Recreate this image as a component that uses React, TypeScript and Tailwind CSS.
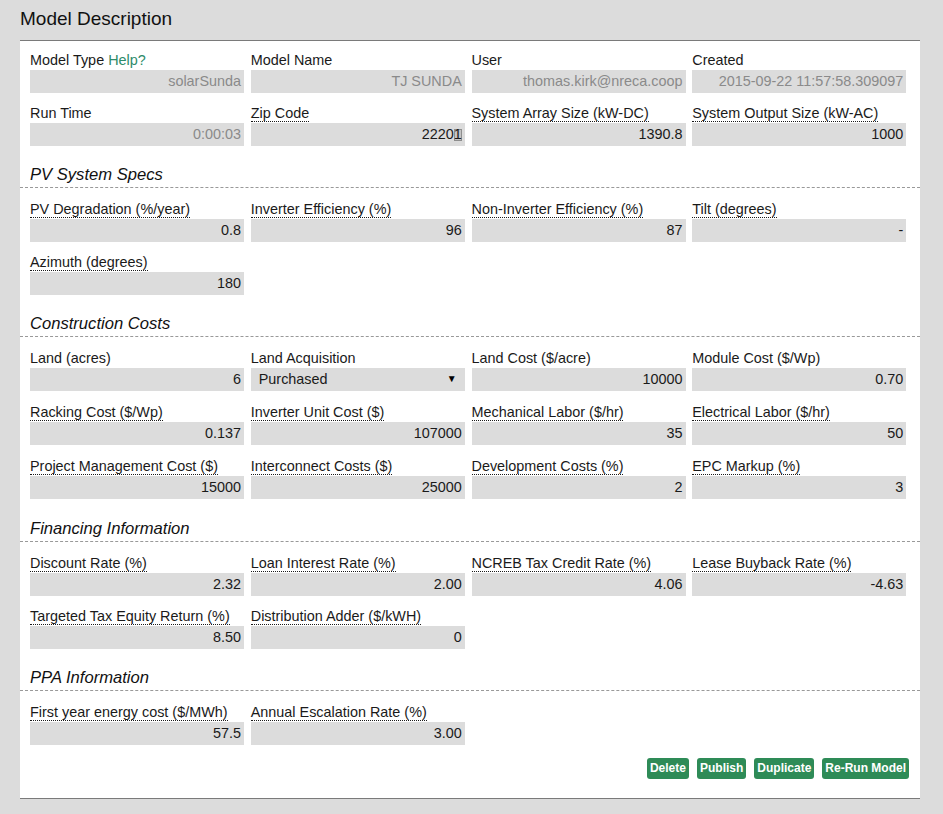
import React from "react";

type Field = {
  label: string;
  value: string;
  u?: boolean;
  disabled?: boolean;
  help?: boolean;
  select?: boolean;
  zip?: boolean;
};

const top: Field[] = [
  { label: "Model Type", value: "solarSunda", disabled: true, help: true },
  { label: "Model Name", value: "TJ SUNDA", disabled: true },
  { label: "User", value: "thomas.kirk@nreca.coop", disabled: true },
  { label: "Created", value: "2015-09-22 11:57:58.309097", disabled: true },
  { label: "Run Time", value: "0:00:03", disabled: true },
  { label: "Zip Code", value: "22201", u: true, zip: true },
  { label: "System Array Size (kW-DC)", value: "1390.8", u: true },
  { label: "System Output Size (kW-AC)", value: "1000", u: true },
];

const sections: { title: string; tall?: boolean; fields: Field[] }[] = [
  {
    title: "PV System Specs",
    fields: [
      { label: "PV Degradation (%/year)", value: "0.8", u: true },
      { label: "Inverter Efficiency (%)", value: "96", u: true },
      { label: "Non-Inverter Efficiency (%)", value: "87", u: true },
      { label: "Tilt (degrees)", value: "-", u: true },
      { label: "Azimuth (degrees)", value: "180", u: true },
    ],
  },
  {
    title: "Construction Costs",
    tall: true,
    fields: [
      { label: "Land (acres)", value: "6" },
      { label: "Land Acquisition", value: "Purchased", select: true },
      { label: "Land Cost ($/acre)", value: "10000" },
      { label: "Module Cost ($/Wp)", value: "0.70" },
      { label: "Racking Cost ($/Wp)", value: "0.137", u: true },
      { label: "Inverter Unit Cost ($)", value: "107000", u: true },
      { label: "Mechanical Labor ($/hr)", value: "35", u: true },
      { label: "Electrical Labor ($/hr)", value: "50", u: true },
      { label: "Project Management Cost ($)", value: "15000", u: true },
      { label: "Interconnect Costs ($)", value: "25000", u: true },
      { label: "Development Costs (%)", value: "2", u: true },
      { label: "EPC Markup (%)", value: "3", u: true },
    ],
  },
  {
    title: "Financing Information",
    fields: [
      { label: "Discount Rate (%)", value: "2.32", u: true },
      { label: "Loan Interest Rate (%)", value: "2.00", u: true },
      { label: "NCREB Tax Credit Rate (%)", value: "4.06", u: true },
      { label: "Lease Buyback Rate (%)", value: "-4.63", u: true },
      { label: "Targeted Tax Equity Return (%)", value: "8.50", u: true },
      { label: "Distribution Adder ($/kWH)", value: "0", u: true },
    ],
  },
  {
    title: "PPA Information",
    fields: [
      { label: "First year energy cost ($/MWh)", value: "57.5", u: true },
      { label: "Annual Escalation Rate (%)", value: "3.00", u: true },
    ],
  },
];

function FieldBox({ f, tall }: { f: Field; tall?: boolean }) {
  return (
    <div className={tall ? "h-[54px]" : "h-[53px]"}>
      <div className="h-[20px] leading-[20px] whitespace-nowrap text-[#1a1a1a]">
        <span className={f.u ? "border-b border-dotted border-[#1a1a1a]" : ""}>{f.label}</span>
        {f.help && <span className="text-[#2e8b6a]"> Help?</span>}
      </div>
      {f.select ? (
        <div className="relative h-[23px] w-[214px] bg-[#dcdcdc] flex items-center pl-[8px] text-[#1a1a1a]">
          {f.value}
          <span className="absolute right-[8px] top-[5px] text-[10px] leading-[12px] text-black">▼</span>
        </div>
      ) : (
        <div
          className={
            "relative h-[23px] w-[214px] bg-[#dcdcdc] flex items-center justify-end pr-[3px] whitespace-nowrap " +
            (f.disabled ? "text-[#8a8a8a]" : "text-[#1a1a1a]")
          }
        >
          {f.zip && (
            <span className="absolute right-[3px] top-[6px] h-[12px] w-[8px] border border-[#8e8e8e] bg-[#c4c4c4]" />
          )}
          <span className="relative">{f.value}</span>
        </div>
      )}
    </div>
  );
}

function Grid({ fields, tall }: { fields: Field[]; tall?: boolean }) {
  return (
    <div className="grid grid-cols-4 pl-[10px] pr-[7px]">
      {fields.map((f) => (
        <FieldBox key={f.label} f={f} tall={tall} />
      ))}
    </div>
  );
}

export default function App() {
  return (
    <div
      className="min-h-[814px] bg-[#dcdcdc] text-[14.4px]"
      style={{ fontFamily: '"Liberation Sans", Arial, sans-serif' }}
    >
      <div className="h-[40px] pl-[20px] pt-[8px] text-[19px] leading-[22px] text-[#111]">
        Model Description
      </div>
      <div className="ml-[20px] w-[900px] bg-white border-t border-b border-[#7a7a7a] pt-[9px] pb-[19px]">
        <Grid fields={top} />
        {sections.map((s) => (
          <div key={s.title}>
            <div className="pl-[10px] pt-[10px] pb-[3px] leading-[18px] text-[16.6px] italic text-[#111] border-b border-dashed border-[#999] mb-[11px]">
              {s.title}
            </div>
            <Grid fields={s.fields} tall={s.tall} />
          </div>
        ))}
        <div className="flex justify-end gap-[8px] pr-[11px] mt-[3px]">
          {["Delete", "Publish", "Duplicate", "Re-Run Model"].map((b) => (
            <button
              key={b}
              className="h-[21px] px-[3px] rounded-[3px] bg-[#2e8b57] text-white text-[12px] font-bold leading-[21px]"
            >
              {b}
            </button>
          ))}
        </div>
      </div>
    </div>
  );
}
